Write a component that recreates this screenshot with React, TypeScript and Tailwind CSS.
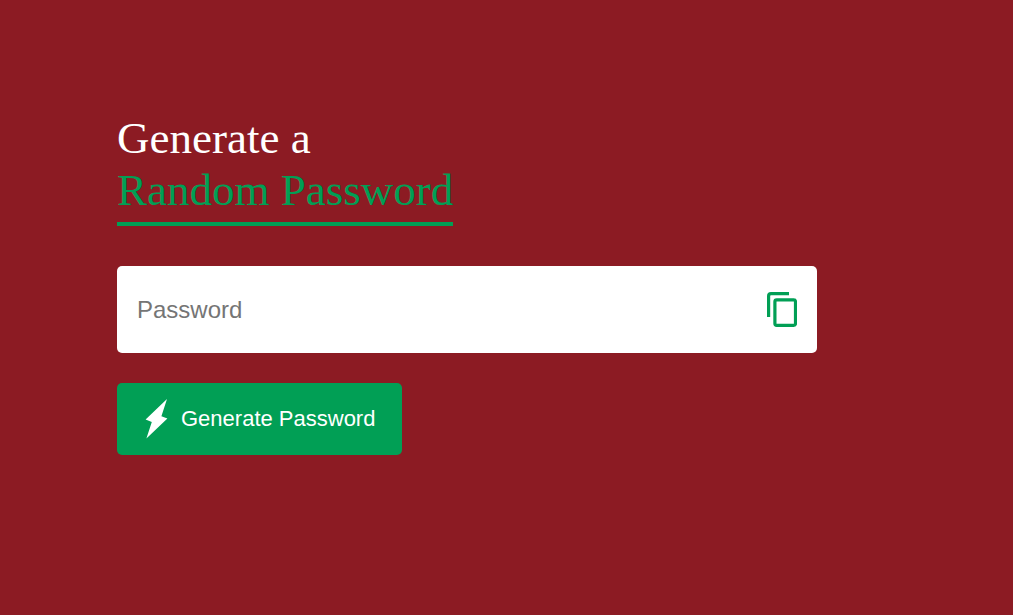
import { useState } from "react";

const CHARS =
  "ABCDEFGHIJKLMNOPQRSTUVWXYZabcdefghijklmnopqrstuvwxyz0123456789@#$&*()-+=";

function CopyIcon() {
  return (
    <svg width="30" height="35" viewBox="0 0 30 35" fill="none" stroke="#019f55" strokeWidth="3.2" aria-hidden="true">
      <path d="M1.6 25V4a2.4 2.4 0 0 1 2.4-2.4H22" />
      <rect x="7.9" y="7.9" width="20.6" height="25.4" rx="1.8" />
    </svg>
  );
}

function BoltIcon() {
  return (
    <svg width="22" height="40" viewBox="0 0 22 40" fill="#fff" className="overflow-visible" aria-hidden="true">
      <path d="M22 1 0.6 21.4 6.8 24 1.4 40.4 22.4 20.6 16.4 18.2Z" />
    </svg>
  );
}

export default function App() {
  const [password, setPassword] = useState("");

  const generate = () => {
    let next = "";
    for (let i = 0; i < 12; i++) {
      next += CHARS[Math.floor(Math.random() * CHARS.length)];
    }
    setPassword(next);
  };

  return (
    <main className="min-h-screen bg-[#8c1b23] pt-28 pr-6 pl-[117px] font-['Liberation_Sans',Arial,sans-serif] text-white">
      <div className="max-w-[700px]">
        <h1 className="font-['Liberation_Serif','Times_New_Roman',serif] text-[45px] leading-[52px]">
          Generate a
          <br />
          <span className="inline-block border-b-4 border-[#019f55] pb-1.5 text-[#019f55]">
            Random Password
          </span>
        </h1>
        <div className="mt-10 flex h-[87px] items-center rounded-[5px] bg-white px-5">
          <input
            type="text"
            aria-label="Password"
            placeholder="Password"
            readOnly
            value={password}
            className="min-w-0 flex-1 bg-transparent text-2xl text-[#333333] outline-none placeholder:text-[#757575]"
          />
          <button
            type="button"
            aria-label="Copy password"
            className="cursor-pointer"
            onClick={() => navigator.clipboard?.writeText(password)}
          >
            <CopyIcon />
          </button>
        </div>
        <button
          type="button"
          onClick={generate}
          className="mt-[30px] flex h-[72px] cursor-pointer items-center gap-3.5 rounded-[5px] bg-[#019f55] pr-[27px] pb-0.5 pl-7 text-[22px] whitespace-nowrap"
        >
          <BoltIcon />
          Generate Password
        </button>
      </div>
    </main>
  );
}
